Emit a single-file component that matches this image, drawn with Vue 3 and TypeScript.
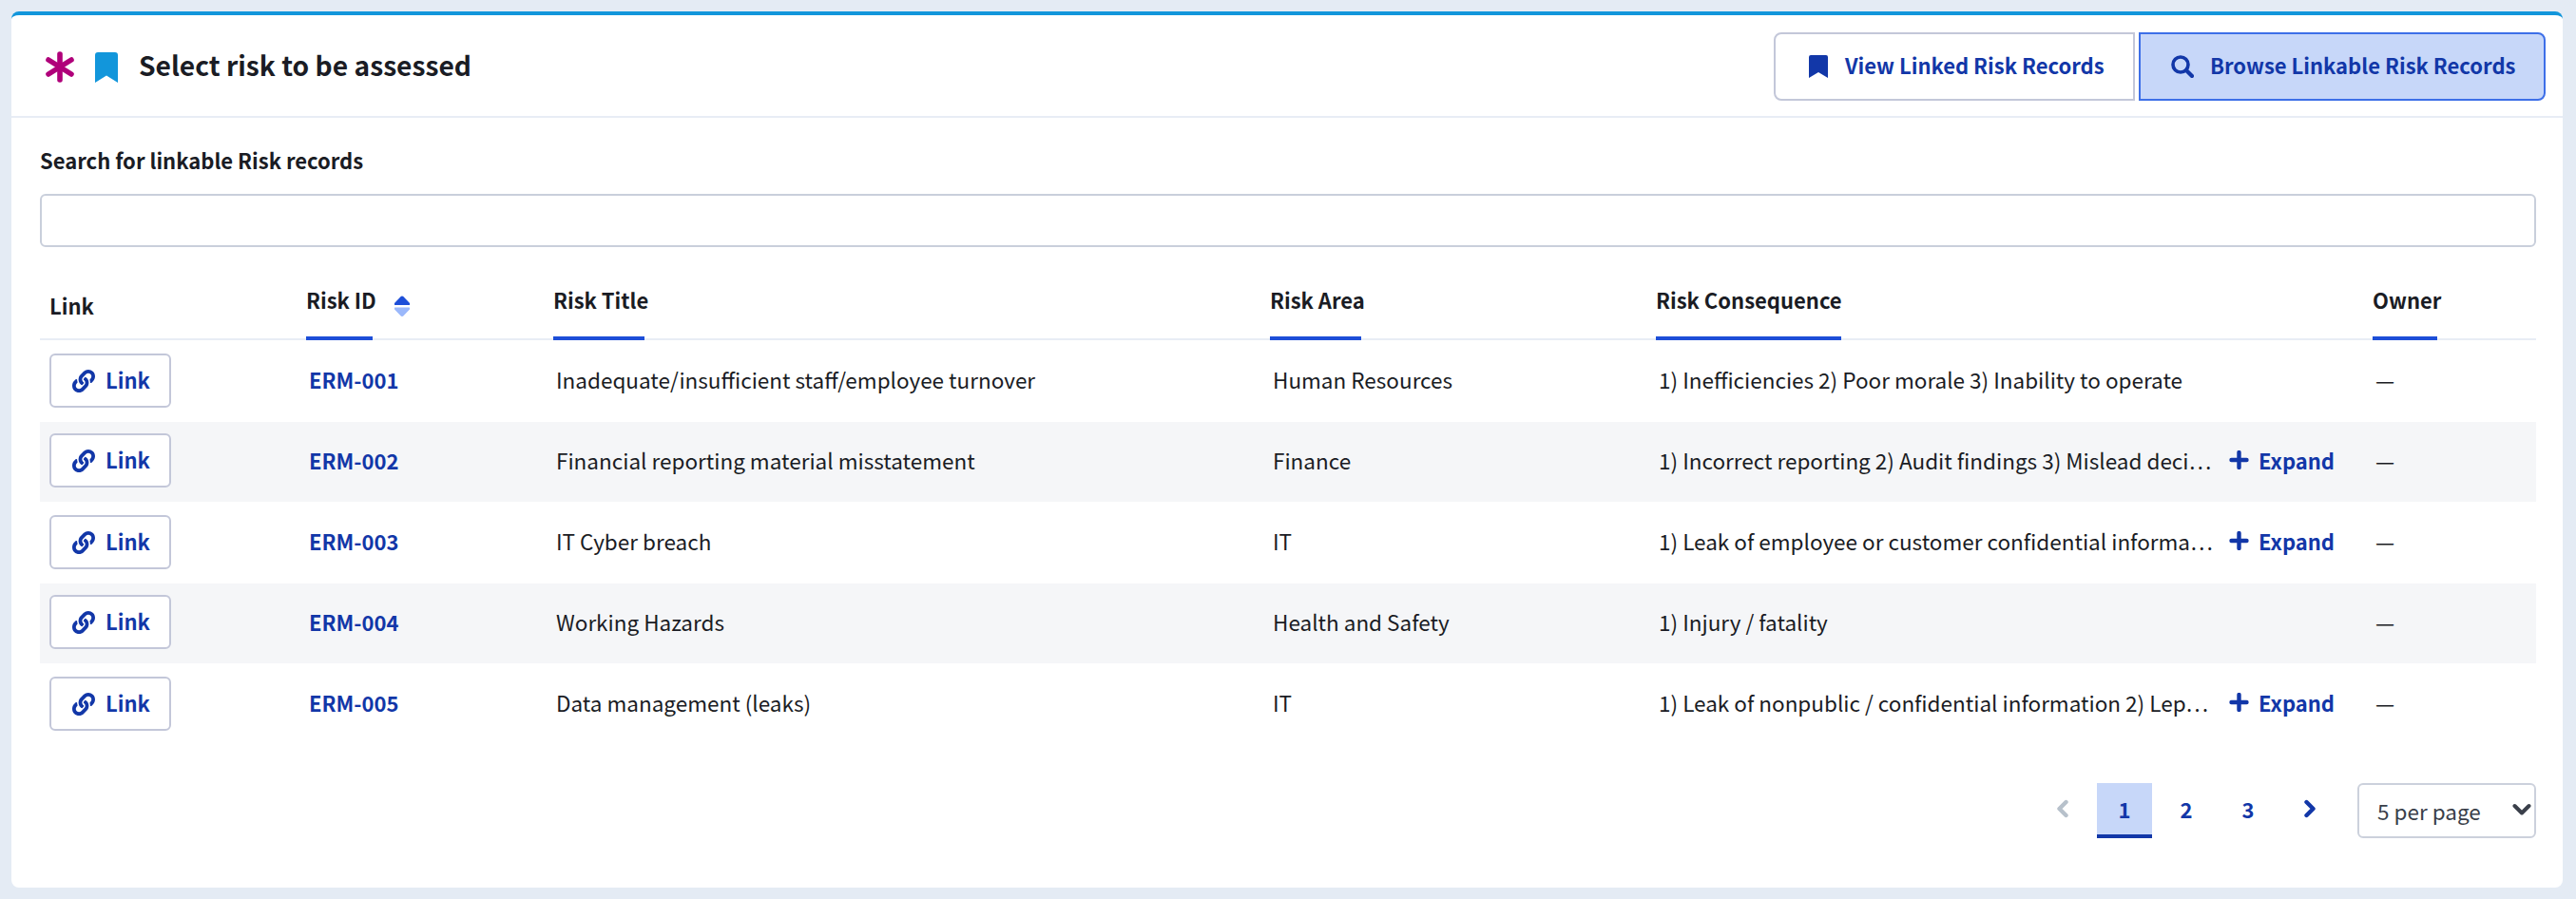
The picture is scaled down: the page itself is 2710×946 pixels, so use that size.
<script setup lang="ts">
interface Row {
  id: string
  title: string
  area: string
  consequence: string
  expandable: boolean
}
const rows: Row[] = [
  { id: 'ERM-001', title: 'Inadequate/insufficient staff/employee turnover', area: 'Human Resources', consequence: '1) Inefficiencies 2) Poor morale 3) Inability to operate', expandable: false },
  { id: 'ERM-002', title: 'Financial reporting material misstatement', area: 'Finance', consequence: '1) Incorrect reporting 2) Audit findings 3) Mislead deci…', expandable: true },
  { id: 'ERM-003', title: 'IT Cyber breach', area: 'IT', consequence: '1) Leak of employee or customer confidential informa…', expandable: true },
  { id: 'ERM-004', title: 'Working Hazards', area: 'Health and Safety', consequence: '1) Injury / fatality', expandable: false },
  { id: 'ERM-005', title: 'Data management (leaks)', area: 'IT', consequence: '1) Leak of nonpublic / confidential information 2) Lep…', expandable: true },
]
const linkPath = 'M326.612 185.391c59.747 59.809 58.927 155.698.36 214.59-.11.12-.24.25-.36.37l-67.2 67.2c-59.27 59.27-155.699 59.262-214.96 0-59.27-59.26-59.27-155.7 0-214.96l37.106-37.106c9.84-9.84 26.786-3.3 27.294 10.606.648 17.722 3.826 35.527 9.69 52.721 1.986 5.822.567 12.262-3.783 16.612l-13.087 13.087c-28.026 28.026-28.905 73.66-1.155 101.96 28.024 28.579 74.086 28.749 102.325.51l67.2-67.19c28.191-28.191 28.073-73.757 0-101.83-3.701-3.694-7.429-6.564-10.341-8.569a16.037 16.037 0 0 1-6.947-12.606c-.396-10.567 3.348-21.456 11.698-29.806l21.054-21.055c5.521-5.521 14.182-6.199 20.584-1.731a152.482 152.482 0 0 1 20.522 17.197zM467.547 44.449c-59.261-59.262-155.69-59.27-214.96 0l-67.2 67.2c-.12.12-.25.25-.36.37-58.566 58.892-59.387 154.781.36 214.59a152.454 152.454 0 0 0 20.521 17.196c6.402 4.468 15.064 3.789 20.584-1.731l21.054-21.055c8.35-8.35 12.094-19.239 11.698-29.806a16.037 16.037 0 0 0-6.947-12.606c-2.912-2.005-6.64-4.875-10.341-8.569-28.073-28.073-28.191-73.639 0-101.83l67.2-67.19c28.239-28.239 74.3-28.069 102.325.51 27.75 28.3 26.872 73.934-1.155 101.96l-13.087 13.087c-4.35 4.35-5.769 10.79-3.783 16.612 5.864 17.194 9.042 34.999 9.69 52.721.509 13.906 17.454 20.446 27.294 10.606l37.106-37.106c59.271-59.259 59.271-155.699.001-214.959z'
</script>

<template>
  <div class="page">
    <section class="card">
      <header class="head">
        <div class="head-title">
          <svg class="asterisk" viewBox="0 0 30 33" width="30" height="33" aria-hidden="true">
            <g stroke="#b0007a" stroke-width="5.6" stroke-linecap="round">
              <line x1="15" y1="3" x2="15" y2="30" />
              <line x1="3" y1="9" x2="27" y2="24" />
              <line x1="27" y1="9" x2="3" y2="24" />
            </g>
          </svg>
          <svg class="bookmark" viewBox="0 0 24 32" width="24" height="32" aria-hidden="true">
            <path d="M0 3a3 3 0 0 1 3-3h18a3 3 0 0 1 3 3v29l-12-7.6L0 32z" fill="#1296db" />
          </svg>
          <h1>Select risk to be assessed</h1>
        </div>
        <div class="tabs">
          <button class="tab tab-left" type="button">
            <svg viewBox="0 0 20 24" width="20" height="24" aria-hidden="true">
              <path d="M0 2a2 2 0 0 1 2-2h16a2 2 0 0 1 2 2v22l-10-6-10 6z" fill="currentColor" />
            </svg>
            <span>View Linked Risk Records</span>
          </button>
          <button class="tab tab-right" type="button">
            <svg viewBox="0 0 24 24" width="24" height="24" aria-hidden="true">
              <circle cx="10" cy="10" r="8" fill="none" stroke="currentColor" stroke-width="3.6" />
              <line x1="16" y1="16" x2="22" y2="22" stroke="currentColor" stroke-width="4.2" stroke-linecap="round" />
            </svg>
            <span>Browse Linkable Risk Records</span>
          </button>
        </div>
      </header>

      <div class="body">
        <label class="search-label" for="risk-search">Search for linkable Risk records</label>
        <input id="risk-search" class="search" type="text" />

        <table class="grid">
          <colgroup>
            <col class="c1" /><col class="c2" /><col class="c3" /><col class="c4" /><col class="c5" /><col class="c6" />
          </colgroup>
          <thead>
            <tr>
              <th><div class="th-in"><span class="th-plain">Link</span></div></th>
              <th>
                <div class="th-in">
                  <span class="th-label w-id">Risk ID</span>
                  <svg class="sort" viewBox="0 0 16 22" width="16" height="22" aria-hidden="true">
                    <path d="M8 0.5c.5 0 1 .2 1.3.6L16 8v1.5a.5.5 0 0 1-.5.5H.5A.5.5 0 0 1 0 9.5V8l6.7-6.900c.3-.4.8-.6 1.300-.6z" fill="#1d4ed8" />
                    <path d="M.5 12.500h15a.5.5 0 0 1 .5.5v1.500l-6.700 7c-.7.700-1.900.700-2.600 0L0 14.500V13a.5.5 0 0 1 .5-.5z" fill="#9bb8fb" />
                  </svg>
                </div>
              </th>
              <th><div class="th-in"><span class="th-label w-title">Risk Title</span></div></th>
              <th><div class="th-in"><span class="th-label w-area">Risk Area</span></div></th>
              <th><div class="th-in"><span class="th-label w-cons">Risk Consequence</span></div></th>
              <th><div class="th-in"><span class="th-label w-owner">Owner</span></div></th>
            </tr>
          </thead>
          <tbody>
            <tr v-for="row in rows" :key="row.id">
              <td class="td-btn">
                <button class="link-btn" type="button">
                  <svg viewBox="0 0 512 512" width="24" height="24" aria-hidden="true"><path :d="linkPath" fill="currentColor" /></svg>
                  <span>Link</span>
                </button>
              </td>
              <td class="td-text"><a class="rid" href="#">{{ row.id }}</a></td>
              <td class="td-text">{{ row.title }}</td>
              <td class="td-text">{{ row.area }}</td>
              <td class="td-text">
                <div class="cons">
                  <span class="cons-text">{{ row.consequence }}</span>
                  <button v-if="row.expandable" class="expand" type="button">
                    <svg viewBox="0 0 20 20" width="21" height="20" aria-hidden="true">
                      <path d="M10 2v16M2 10h16" stroke="currentColor" stroke-width="4.4" stroke-linecap="round" fill="none" />
                    </svg>
                    <span>Expand</span>
                  </button>
                </div>
              </td>
              <td class="td-text">—</td>
            </tr>
          </tbody>
        </table>

        <nav class="pager">
          <button class="pg-arrow off" type="button" aria-label="Previous">
            <svg viewBox="0 0 14 20" width="14" height="20" aria-hidden="true">
              <path d="M10.500 3 3.500 10l7 7" fill="none" stroke="currentColor" stroke-width="4.400" stroke-linecap="round" stroke-linejoin="round" />
            </svg>
          </button>
          <button class="pg on" type="button">1</button>
          <button class="pg" type="button">2</button>
          <button class="pg" type="button">3</button>
          <button class="pg-arrow" type="button" aria-label="Next">
            <svg viewBox="0 0 14 20" width="14" height="20" aria-hidden="true">
              <path d="M3.500 3 10.500 10l-7 7" fill="none" stroke="currentColor" stroke-width="4.400" stroke-linecap="round" stroke-linejoin="round" />
            </svg>
          </button>
          <div class="per-page">
            <select class="per-select">
              <option>5 per page</option>
              <option>10 per page</option>
            </select>
            <svg class="per-chev" viewBox="0 0 20 14" width="20" height="14" aria-hidden="true">
              <path d="M2.500 3 10 10.500 17.500 3" fill="none" stroke="#3a3f4a" stroke-width="4" stroke-linecap="round" stroke-linejoin="round" />
            </svg>
          </div>
        </nav>
      </div>
    </section>
  </div>
</template>

<style>
html, body { margin: 0; background: #e4ebf4; }
</style>

<style scoped>
.page {
  box-sizing: border-box;
  width: 2710px;
  height: 946px;
  padding: 12px 14px 12px 12px;
  background: #e4ebf4;
  font-family: "Noto Sans CJK SC", "Noto Sans", sans-serif;
  font-size: 22.5px;
  line-height: 36px;
  color: #1a1c24;
}
.card {
  box-sizing: border-box;
  height: 922px;
  background: #fff;
  border-top: 4px solid #1296db;
  border-radius: 8px;
}
.head {
  display: flex;
  align-items: center;
  justify-content: space-between;
  box-sizing: border-box;
  height: 108px;
  padding: 18px 18px 16px 36px;
  border-bottom: 2px solid #e8edf5;
}
.head-title { display: flex; align-items: center; }
.asterisk { margin-top: 1px; }
.bookmark { margin-left: 22px; margin-top: 1px; }
h1 {
  margin: 0 0 5px 22px;
  font-size: 28.2px;
  line-height: 40px;
  font-weight: 600;
}
.tabs { display: flex; gap: 4px; }
.tab {
  display: flex;
  align-items: center;
  box-sizing: border-box;
  height: 72px;
  gap: 18px;
  padding: 0 0 4px 35px;
  font: inherit;
  font-size: 22px;
  font-weight: 600;
  white-space: nowrap;
  color: #1237a8;
  background: #fff;
  border: 2px solid #c3c7d9;
}
.tab svg { margin-top: 4px; }
.tab-left { width: 380px; border-radius: 8px 0 0 8px; }
.tab-right {
  width: 428px;
  gap: 17px;
  padding-left: 32px;
  background: #c7d7f9;
  border-color: #3d6fe8;
  border-radius: 0 8px 8px 0;
}
.body { padding: 26px 28px 0 30px; }
.search-label {
  display: block;
  font-size: 22px;
  font-weight: 600;
  margin-bottom: 18px;
}
.search {
  display: block;
  box-sizing: border-box;
  width: 100%;
  height: 56px;
  border: 2px solid #c9cfdb;
  border-radius: 6px;
  background: #fff;
  outline: none;
}
.grid {
  width: 2626px;
  margin-top: 30px;
  table-layout: fixed;
  border-collapse: separate;
  border-spacing: 0;
}
.c1 { width: 270px; }
.c2 { width: 260px; }
.c3 { width: 754px; }
.c4 { width: 406px; }
.c5 { width: 754px; }
.c6 { width: 182px; }
th {
  padding: 0 0 0 10px;
  text-align: left;
  font-size: 22px;
  font-weight: 600;
  border-bottom: 2px solid #e8edf5;
}
.th-in {
  display: flex;
  align-items: flex-end;
  height: 68px;
  margin-bottom: -2px;
}
.th-plain { padding-bottom: 19px; }
.th-label {
  box-sizing: border-box;
  display: block;
  height: 61px;
  padding-top: 0;
  white-space: nowrap;
  border-bottom: 4px solid #1d4ed8;
}
.w-id { width: 70px; }
.w-title { width: 96px; }
.w-area { width: 96px; }
.w-cons { width: 195px; }
.w-owner { width: 68px; }
.sort { margin: 0 0 25px 23px; }
tbody tr:nth-child(odd) td { height: 86px; }
tbody tr:nth-child(even) td { height: 84px; background: #f5f6f8; }
td { padding: 0 0 0 10px; white-space: nowrap; }
.td-text { padding-left: 13px; padding-bottom: 5px; box-sizing: border-box; }
.link-btn {
  display: flex;
  align-items: center;
  box-sizing: border-box;
  width: 128px;
  height: 57px;
  gap: 11px;
  padding: 0 0 3px 22px;
  margin-bottom: 1px;
  font: inherit;
  font-size: 22px;
  font-weight: 600;
  color: #1237a8;
  background: #fff;
  border: 2px solid #c3c7d9;
  border-radius: 6px;
}
.link-btn svg { margin-top: 3px; }
tbody tr:nth-child(even) .link-btn { margin-bottom: 3px; }
.rid { color: #1237a8; font-size: 22px; font-weight: 600; text-decoration: none; }
.cons { display: flex; align-items: center; }
.cons-text { width: 600px; flex: none; }
.expand {
  display: flex;
  align-items: center;
  gap: 10px;
  padding: 0;
  font: inherit;
  font-size: 22px;
  font-weight: 600;
  color: #1237a8;
  background: none;
  border: 0;
}
.pager {
  display: flex;
  justify-content: flex-end;
  align-items: flex-start;
  gap: 7px;
  padding-top: 40px;
}
.pg, .pg-arrow {
  box-sizing: border-box;
  width: 58px;
  height: 58px;
  padding: 0;
  font: inherit;
  font-size: 22px;
  font-weight: 600;
  color: #1237a8;
  background: none;
  border: 0;
  border-bottom: 4px solid transparent;
}
.pg-arrow { display: flex; align-items: center; justify-content: center; }
.off { color: #b7c1cb; }
.on { background: #c7d7f9; border-bottom-color: #1237a8; }
.per-page { position: relative; margin-left: 14px; }
.per-select {
  display: block;
  box-sizing: border-box;
  width: 188px;
  height: 58px;
  padding: 0 0 0 19px;
  font: inherit;
  color: #3a3f4a;
  background: #fff;
  border: 2px solid #ccd1dc;
  border-radius: 6px;
  appearance: none;
  outline: none;
}
.per-chev { position: absolute; right: 5px; top: 21px; pointer-events: none; }
</style>
